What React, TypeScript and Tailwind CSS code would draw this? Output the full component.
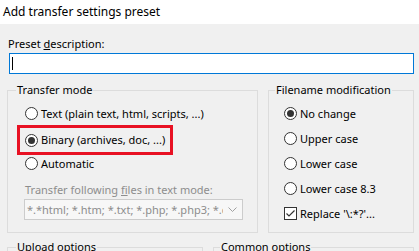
import React from "react";

const font = { fontFamily: '"Noto Sans", "Open Sans", sans-serif' };

function Radio({ checked, label, h = "h-[25px]" }: { checked?: boolean; label: string; h?: string }) {
  return (
    <div className={"flex items-center " + h}>
      <span className="w-[13px] h-[13px] rounded-full border border-[#333333] bg-white flex items-center justify-center shrink-0">
        {checked && <span className="w-[7px] h-[7px] rounded-full bg-[#333333]" />}
      </span>
      <span className="ml-[3px] whitespace-nowrap">{label}</span>
    </div>
  );
}

export default function App() {
  return (
    <div
      className="w-[419px] h-[251px] overflow-hidden bg-[#f0f0f0] text-[11px] leading-[16px] text-black"
      style={font}
    >
      <div className="h-[24px] bg-white flex items-center px-[3px] text-[12px]">
        <span>Add transfer settings preset</span>
      </div>
      <div className="pt-[12px]">
        <div className="pl-[8px] h-[16px]">
          Preset <span className="underline">d</span>escription:
        </div>
        <div className="ml-[9px] mt-[1px] w-[405px] h-[21px] border border-[#0078d7] bg-white flex items-center pl-[2px]">
          <span className="w-px h-[13px] bg-black" />
        </div>
        <div className="flex mt-[8px] pl-[7px] gap-[10px]">
          <fieldset className="min-w-0 w-[251px] h-[151px] border border-[#dcdcdc] pl-[17px] pr-[8px] pt-[3px]">
            <legend className="-ml-[9px] px-px whitespace-nowrap">Transfer mode</legend>
            <Radio label="Text (plain text, html, scripts, ...)" />
            <div className="-ml-[8px] mt-[-1px] mb-[-4px] pl-[5px] border-[3px] border-[#e81123] w-[156px]">
              <Radio checked label="Binary (archives, doc, ...)" h="h-[24px]" />
            </div>
            <Radio label="Automatic" />
            <div className="h-[23px] pt-[6px] text-[#8d8d8d] whitespace-nowrap">
              Transfer following <span className="underline">f</span>iles in text mode:
            </div>
            <div className="-ml-[1px] w-[219px] h-[21px] border border-[#cccccc] bg-[#f7f7f7] flex items-center text-[#8d8d8d] overflow-hidden">
              <span className="pl-[2px] whitespace-nowrap overflow-hidden w-[198px] shrink-0">*.*html; *.htm; *.txt; *.php; *.php3; *.cgi</span>
              <span className="flex-1 flex justify-center">
                <svg width="9" height="5" viewBox="0 0 9 5">
                  <path d="M0.5 0.5 L4.5 4.5 L8.5 0.5" fill="none" stroke="#a0a0a0" strokeWidth="1" />
                </svg>
              </span>
            </div>
          </fieldset>
          <fieldset className="min-w-0 w-[146px] h-[151px] border border-[#dcdcdc] pl-[15px] pr-[4px] pt-[3px]">
            <legend className="-ml-[9px] px-px whitespace-nowrap">Filename modification</legend>
            <Radio checked label="No change" />
            <Radio label="Upper case" />
            <Radio label="Lower case" />
            <Radio label="Lower case 8.3" />
            <div className="flex items-center h-[25px]">
              <span className="w-[13px] h-[13px] border border-[#333333] bg-white flex items-center justify-center shrink-0">
                <svg width="11" height="11" viewBox="0 0 11 11">
                  <path d="M1.5 5.5 L4 8 L9.5 2.5" fill="none" stroke="#333333" strokeWidth="1.2" />
                </svg>
              </span>
              <span className="ml-[3px] whitespace-nowrap">Replace '\:*?'...</span>
            </div>
          </fieldset>
        </div>
        <div className="flex mt-[6px] pl-[7px] gap-[10px]">
          <fieldset className="min-w-0 w-[196px] h-[40px] border border-[#dcdcdc]">
            <legend className="ml-[8px] px-px whitespace-nowrap">Upload options</legend>
          </fieldset>
          <fieldset className="min-w-0 w-[201px] h-[40px] border border-[#dcdcdc]">
            <legend className="ml-[6px] px-px whitespace-nowrap">Common options</legend>
          </fieldset>
        </div>
      </div>
    </div>
  );
}
